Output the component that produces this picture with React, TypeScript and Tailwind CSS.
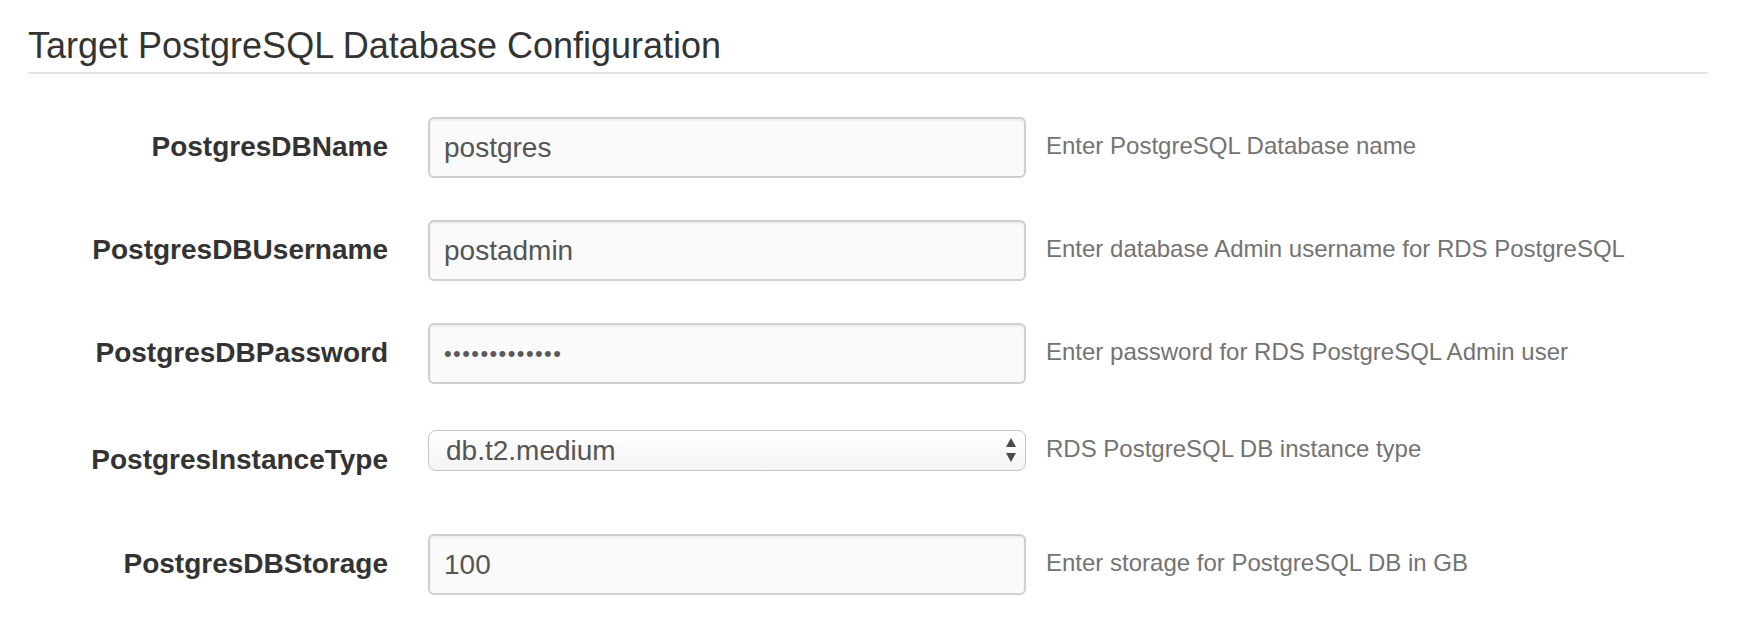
import React from 'react';

type Row = {
  label: string;
  value: string;
  help: string;
  kind: 'text' | 'password' | 'select';
};

const rows: Row[] = [
  { label: 'PostgresDBName', value: 'postgres', help: 'Enter PostgreSQL Database name', kind: 'text' },
  { label: 'PostgresDBUsername', value: 'postadmin', help: 'Enter database Admin username for RDS PostgreSQL', kind: 'text' },
  { label: 'PostgresDBPassword', value: '•••••••••••••', help: 'Enter password for RDS PostgreSQL Admin user', kind: 'password' },
  { label: 'PostgresInstanceType', value: 'db.t2.medium', help: 'RDS PostgreSQL DB instance type', kind: 'select' },
  { label: 'PostgresDBStorage', value: '100', help: 'Enter storage for PostgreSQL DB in GB', kind: 'text' },
];

const SelectArrows: React.FC = () => (
  <svg width="10" height="25" viewBox="0 0 10 25" className="text-[#4a4a4a]">
    <path d="M5 0 L10 9 L0 9 Z" fill="currentColor" />
    <path d="M0 15 L10 15 L5 24 Z" fill="currentColor" />
  </svg>
);

const Control: React.FC<{ row: Row }> = ({ row }) => {
  if (row.kind === 'select') {
    return (
      <div className="flex h-[41px] w-[598px] items-center justify-between rounded-[8px] border border-[#c4c4c4] bg-gradient-to-b from-[#ffffff] to-[#f4f4f4] pl-[17px] pr-[9px] text-[28px] leading-none text-[#555]">
        <span>{row.value}</span>
        <SelectArrows />
      </div>
    );
  }
  return (
    <div className="flex h-[61px] w-[598px] items-center rounded-[6px] border-2 border-[#cfcfcf] bg-[#fafafa] pl-[14px] text-[#555] shadow-[inset_0_2px_2px_rgba(0,0,0,0.05)]">
      {row.kind === 'password' ? (
        <span className="text-[22px] tracking-[1.4px] text-[#5a5a5a]">{row.value}</span>
      ) : (
        <span className="text-[28px] leading-none">{row.value}</span>
      )}
    </div>
  );
};

export default function App() {
  return (
    <div className="min-h-[636px] bg-white pl-[28px] pr-[32px] font-['Liberation_Sans',Arial,sans-serif]">
      <div className="border-b-2 border-[#e5e5e5] pb-[6px] pt-[26px]">
        <h3 className="text-[36px] leading-[40px] text-[#333]">Target PostgreSQL Database Configuration</h3>
      </div>

      <div className="mt-[43px] flex flex-col">
        {rows.map((row, i) => (
          <div
            key={row.label}
            className={
              'flex items-start ' +
              (i === 3 ? 'mt-[46px] mb-[2px]' : i === 0 ? '' : 'mt-[42px]')
            }
          >
            <div className="flex h-[60px] w-[360px] shrink-0 items-center justify-end text-[28px] font-bold text-[#333]">
              {row.label}
            </div>
            <div className="ml-[40px] shrink-0">
              <Control row={row} />
            </div>
            <div
              className={
                'ml-[20px] flex items-center text-[24px] text-[#737373] ' +
                (row.kind === 'select' ? 'h-[37px]' : 'h-[58px]')
              }
            >
              {row.help}
            </div>
          </div>
        ))}
      </div>
    </div>
  );
}
